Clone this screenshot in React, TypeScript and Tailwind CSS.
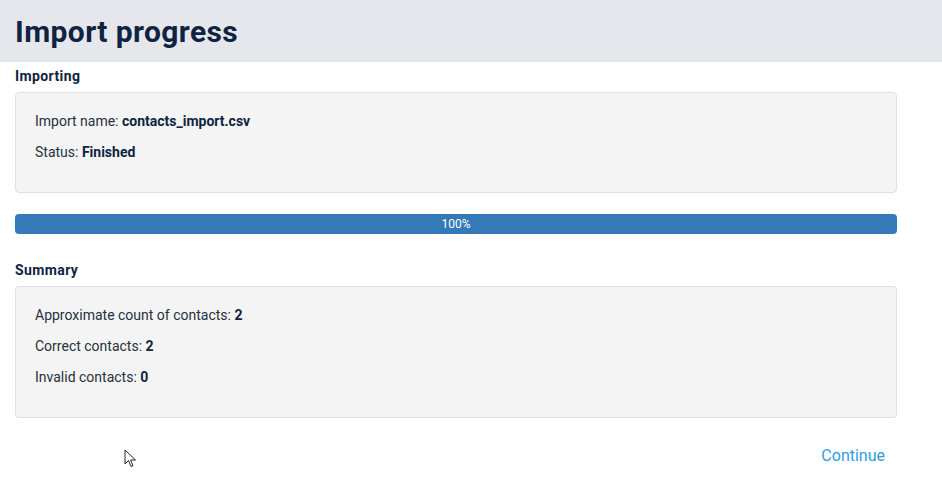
export default function App() {
  return (
    <div className="relative min-h-[496px] bg-white font-['Roboto',sans-serif] text-[#26313d]">
      <div className="flex h-[62px] items-center bg-[#e6e7ec] px-[15px]">
        <h1 className="text-[30px] font-bold tracking-[0.4px] text-[#0f2441]">Import progress</h1>
      </div>

      <div className="w-[882px] ml-[15px]">
        <h2 className="mt-[5px] text-[14px] font-bold leading-[18px] tracking-[0.4px] text-[#0f2441]">Importing</h2>
        <div className="mt-[7px] h-[101px] rounded-[4px] border border-[#e1e1e1] bg-[#f4f4f4] px-[19px] pt-[18px] text-[14px]">
          <p className="leading-[20px]">
            Import name: <b className="text-[#0f2441]">contacts_import.csv</b>
          </p>
          <p className="mt-[11px] leading-[20px]">
            Status: <b className="text-[#0f2441]">Finished</b>
          </p>
        </div>

        <div className="mt-[21px] flex h-[20px] items-center justify-center rounded-[4px] bg-[#337ab7] text-[12px] text-white">
          100%
        </div>

        <h2 className="mt-[27px] text-[14px] font-bold leading-[18px] tracking-[0.4px] text-[#0f2441]">Summary</h2>
        <div className="mt-[7px] h-[132px] rounded-[4px] border border-[#e1e1e1] bg-[#f4f4f4] px-[19px] pt-[18px] text-[14px]">
          <p className="leading-[20px]">
            Approximate count of contacts: <b className="text-[#0f2441]">2</b>
          </p>
          <p className="mt-[11px] leading-[20px]">
            Correct contacts: <b className="text-[#0f2441]">2</b>
          </p>
          <p className="mt-[11px] leading-[20px]">
            Invalid contacts: <b className="text-[#0f2441]">0</b>
          </p>
        </div>

        <div className="mt-[26px] flex justify-end pr-[12px]">
          <button className="text-[16px] text-[#2f9de0]">Continue</button>
        </div>
      </div>

      {/* mouse pointer */}
      <svg className="absolute left-[124px] top-[449px]" width="13" height="20" viewBox="0 0 13 20">
        <path d="M1 1 L1 15 L4.5 11.5 L7 17.5 L9 16.7 L6.6 11 L11.5 11 Z" fill="white" stroke="#222" strokeWidth="1" strokeLinejoin="round" />
      </svg>
    </div>
  );
}
